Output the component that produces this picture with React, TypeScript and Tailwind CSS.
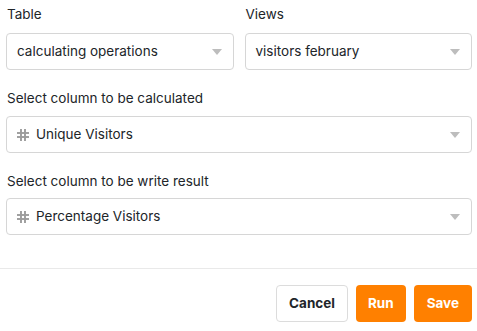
import React from 'react';

function Caret() {
    return (
        <svg width="10" height="6" viewBox="0 0 10 6" className="shrink-0">
            <path d="M0 0 L10 0 L5 6 Z" fill="#bdbdbd" />
        </svg>
    );
}

function Hash() {
    return (
        <svg width="12" height="12" viewBox="0 0 12 12" className="shrink-0">
            <g stroke="#9c9c9c" strokeWidth="1.9">
                <line x1="4" y1="0" x2="4" y2="12" />
                <line x1="8" y1="0" x2="8" y2="12" />
                <line x1="0" y1="4" x2="12" y2="4" />
                <line x1="0" y1="8" x2="12" y2="8" />
            </g>
        </svg>
    );
}

function Select({ value, column }: { value: string; column?: boolean }) {
    return (
        <div className="h-[37px] flex items-center justify-between rounded-[4px] border border-[#d6d6d6] bg-white pl-[10px] pr-[11px]">
            <div className="flex items-center gap-[7px] text-[13.5px] text-[#212529]">
                {column && <Hash />}
                <span>{value}</span>
            </div>
            <Caret />
        </div>
    );
}

function Label({ text }: { text: string }) {
    return <div className="h-[20px] leading-[20px] text-[13.5px] text-[#212529] px-[1px]">{text}</div>;
}

export default function App() {
    return (
        <div className="w-[477px] h-[331px] bg-white flex flex-col" style={{ fontFamily: 'Inter, "Noto Sans", sans-serif' }}>
            <div className="pl-[6px] pr-[5px] pt-[4px]">
                <div className="grid grid-cols-2 gap-[11px]">
                    <div className="flex flex-col gap-[9px]">
                        <Label text="Table" />
                        <Select value="calculating operations" />
                    </div>
                    <div className="flex flex-col gap-[9px]">
                        <Label text="Views" />
                        <Select value="visitors february" />
                    </div>
                </div>
                <div className="mt-[18px] flex flex-col gap-[8px]">
                    <Label text="Select column to be calculated" />
                    <Select value="Unique Visitors" column />
                </div>
                <div className="mt-[18px] flex flex-col gap-[7px]">
                    <Label text="Select column to be write result" />
                    <Select value="Percentage Visitors" column />
                </div>
            </div>
            <div className="mt-[33px] border-t border-[#e9e9e9]" />
            <div className="flex justify-end gap-[8px] pt-[16px] pr-[5px]">
                <button className="h-[37px] px-[12px] rounded-[4px] border border-[#dcdcdc] bg-white text-[13.5px] font-bold text-[#212529]">Cancel</button>
                <button className="h-[37px] px-[12px] rounded-[4px] bg-[#ff8000] text-[13.5px] font-bold text-white">Run</button>
                <button className="h-[37px] px-[13px] rounded-[4px] bg-[#ff8000] text-[13.5px] font-bold text-white">Save</button>
            </div>
        </div>
    );
}
